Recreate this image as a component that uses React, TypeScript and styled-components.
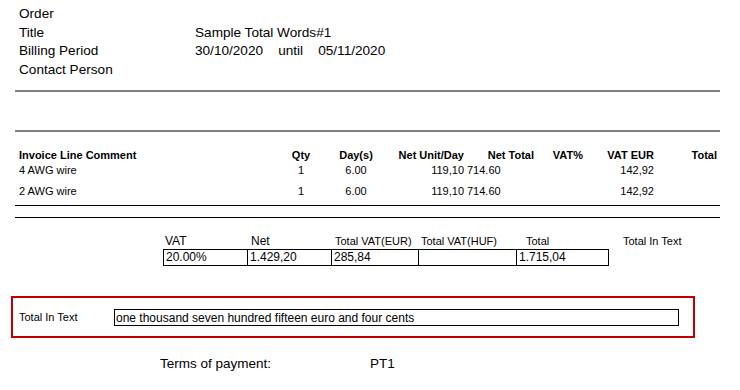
import React from "react";
import styled, { createGlobalStyle } from "styled-components";

const Global = createGlobalStyle`
  html, body { margin: 0; padding: 0; background: #fff; }
  body { font-family: "Liberation Sans", Arial, sans-serif; color: #000; }
`;

const Page = styled.div`
  width: 740px;
  height: 390px;
  padding: 5px 20px 0 15px;
  box-sizing: border-box;
  display: flex;
  flex-direction: column;
`;

const InfoBlock = styled.div`
  display: grid;
  grid-template-columns: 176px 1fr;
  padding-left: 4px;
  font-size: 13.6px;
  line-height: 18.67px;
`;

const Label = styled.div``;
const Value = styled.div`
  white-space: pre;
`;

const Rule = styled.div<{ $gray?: boolean; $mt: number }>`
  height: ${(p) => (p.$gray ? 2 : 1)}px;
  background: ${(p) => (p.$gray ? "#808080" : "#000")};
  margin-top: ${(p) => p.$mt}px;
  width: 705px;
`;

const LineTable = styled.div`
  margin-top: 16px;
  margin-left: 4px;
  display: grid;
  grid-template-columns: 262px 40px 70px 73px 70px 49px 71px 63px;
  font-size: 11px;
`;

const HeadCell = styled.div<{ $align: string }>`
  font-weight: bold;
  line-height: 14px;
  height: 15px;
  text-align: ${(p) => p.$align};
  white-space: nowrap;
`;

const Cell = styled.div<{ $align: string; $pl?: number }>`
  line-height: 14px;
  height: 21px;
  text-align: ${(p) => p.$align};
  padding-left: ${(p) => p.$pl ?? 0}px;
  white-space: nowrap;
`;

const Summary = styled.div`
  margin-top: 16px;
  margin-left: 148px;
  display: grid;
  grid-template-columns: 85px 84px 87px 98px 92px auto;
  align-items: end;
`;

const SumHead = styled.div<{ $size: number; $pl: number }>`
  font-size: ${(p) => p.$size}px;
  line-height: 14px;
  padding-left: ${(p) => p.$pl}px;
  margin-bottom: 1px;
  white-space: nowrap;
`;

const SumCell = styled.div<{ $first?: boolean }>`
  height: 15px;
  border: 1px solid #000;
  border-left-width: ${(p) => (p.$first ? 1 : 0)}px;
  font-size: 12px;
  line-height: 15px;
  padding-left: 2px;
`;

const RedBox = styled.div`
  margin-top: 30px;
  margin-left: -4px;
  width: 660px;
  border: 2px solid #c00000;
  padding: 11px 14px 10px 6px;
  display: flex;
  align-items: center;
`;

const RedLabel = styled.div`
  width: 95px;
  font-size: 11px;
`;

const TextBox = styled.div`
  flex: 1;
  height: 15px;
  border: 1px solid #000;
  font-size: 12px;
  line-height: 16px;
  padding-left: 1px;
`;

const Terms = styled.div`
  margin-top: 18px;
  margin-left: 145px;
  display: grid;
  grid-template-columns: 210px auto;
  font-size: 13.5px;
  line-height: 16px;
`;

const rows = [
  { c: "4 AWG wire", q: "1", d: "6.00", u: "119,10", n: "714.60", v: "", e: "142,92", t: "" },
  { c: "2 AWG wire", q: "1", d: "6.00", u: "119,10", n: "714.60", v: "", e: "142,92", t: "" },
];

export default function App() {
  return (
    <>
      <Global />
      <Page>
        <InfoBlock>
          <Label>Order</Label>
          <Value></Value>
          <Label>Title</Label>
          <Value>Sample Total Words#1</Value>
          <Label>Billing Period</Label>
          <Value>30/10/2020    until    05/11/2020</Value>
          <Label>Contact Person</Label>
          <Value></Value>
        </InfoBlock>
        <Rule $gray $mt={10} />
        <Rule $gray $mt={38} />
        <LineTable>
          <HeadCell $align="left">Invoice Line Comment</HeadCell>
          <HeadCell $align="center">Qty</HeadCell>
          <HeadCell $align="center">Day(s)</HeadCell>
          <HeadCell $align="right">Net Unit/Day</HeadCell>
          <HeadCell $align="right">Net Total</HeadCell>
          <HeadCell $align="right">VAT%</HeadCell>
          <HeadCell $align="right">VAT EUR</HeadCell>
          <HeadCell $align="right">Total</HeadCell>
          {rows.map((r, i) => (
            <React.Fragment key={i}>
              <Cell $align="left">{r.c}</Cell>
              <Cell $align="center">{r.q}</Cell>
              <Cell $align="center">{r.d}</Cell>
              <Cell $align="right">{r.u}</Cell>
              <Cell $align="left" $pl={3}>{r.n}</Cell>
              <Cell $align="right">{r.v}</Cell>
              <Cell $align="right">{r.e}</Cell>
              <Cell $align="right">{r.t}</Cell>
            </React.Fragment>
          ))}
        </LineTable>
        <Rule $mt={0} />
        <Rule $mt={11} />
        <Summary>
          <SumHead $size={12} $pl={2}>VAT</SumHead>
          <SumHead $size={12} $pl={3}>Net</SumHead>
          <SumHead $size={11} $pl={3}>Total VAT(EUR)</SumHead>
          <SumHead $size={11} $pl={2}>Total VAT(HUF)</SumHead>
          <SumHead $size={11} $pl={9}>Total</SumHead>
          <SumHead $size={11} $pl={14}>Total In Text</SumHead>
          <SumCell $first>20.00%</SumCell>
          <SumCell>1.429,20</SumCell>
          <SumCell>285,84</SumCell>
          <SumCell></SumCell>
          <SumCell>1.715,04</SumCell>
          <div />
        </Summary>
        <RedBox>
          <RedLabel>Total In Text</RedLabel>
          <TextBox>one thousand seven hundred fifteen euro and four cents</TextBox>
        </RedBox>
        <Terms>
          <div>Terms of payment:</div>
          <div>PT1</div>
        </Terms>
      </Page>
    </>
  );
}
